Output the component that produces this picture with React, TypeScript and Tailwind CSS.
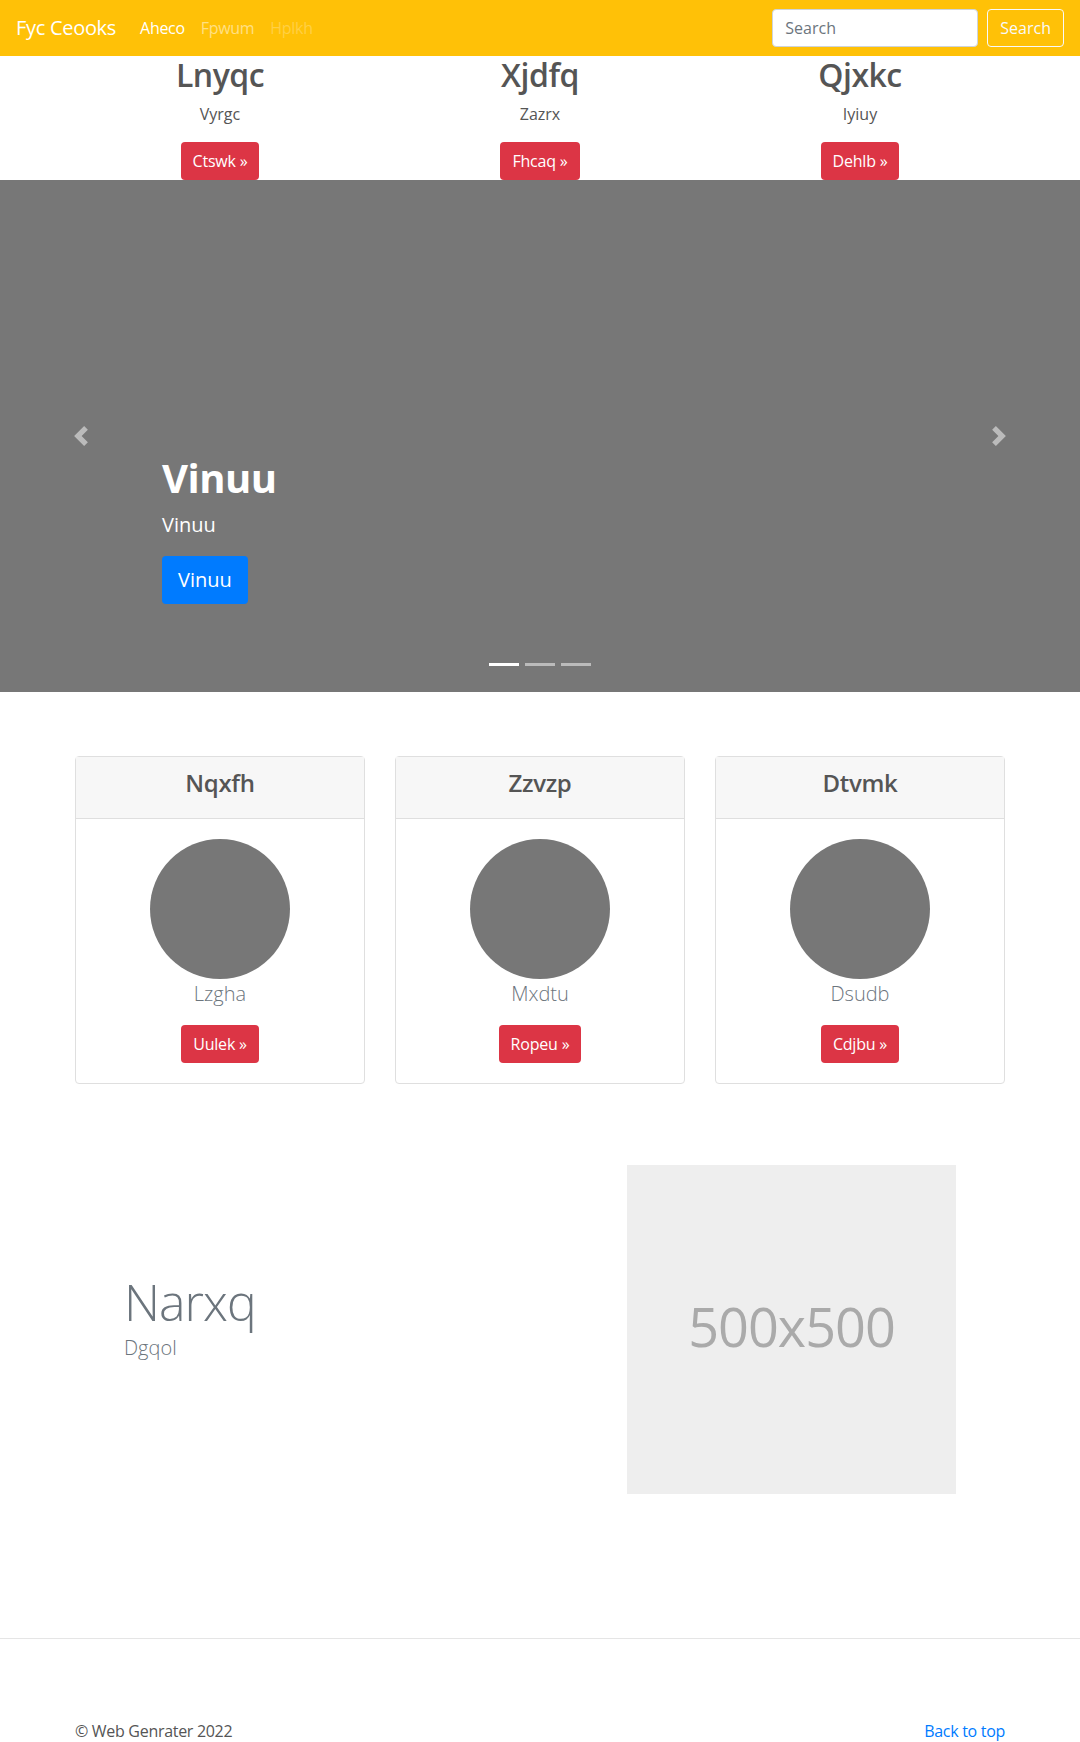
import React from 'react';

const font = { fontFamily: '"Open Sans", "Noto Sans", Arial, sans-serif' };

const topCols = [
    { title: 'Lnyqc', text: 'Vyrgc', btn: 'Ctswk' },
    { title: 'Xjdfq', text: 'Zazrx', btn: 'Fhcaq' },
    { title: 'Qjxkc', text: 'Iyiuy', btn: 'Dehlb' },
];

const cards = [
    { title: 'Nqxfh', text: 'Lzgha', btn: 'Uulek' },
    { title: 'Zzvzp', text: 'Mxdtu', btn: 'Ropeu' },
    { title: 'Dtvmk', text: 'Dsudb', btn: 'Cdjbu' },
];

function RedButton({ label }: { label: string }) {
    return (
        <button className="h-[38px] px-3 rounded bg-[#dc3545] text-white text-[16px] leading-6 tracking-[-0.2px]">
            {label} &raquo;
        </button>
    );
}

function Navbar() {
    return (
        <nav className="h-[56px] bg-[#ffc107] flex items-center px-4">
            <span className="text-[20px] leading-[30px] text-white mr-4 tracking-[-0.3px]">Fyc Ceooks</span>
            <div className="flex">
                <a className="px-2 py-2 text-white tracking-[-0.3px]">Aheco</a>
                <a className="px-2 py-2 text-white/50 tracking-[-0.3px]">Fpwum</a>
                <a className="px-2 py-2 text-white/25 tracking-[-0.3px]">Hplkh</a>
            </div>
            <div className="ml-auto flex items-center gap-[9px]">
                <input
                    className="w-[206px] h-[38px] bg-white border border-[#ced4da] rounded px-3 text-[16px] text-[#495057] placeholder:text-[#6c757d] outline-none"
                    placeholder="Search"
                    style={font}
                />
                <button className="h-[38px] px-3 border border-[#f8f9fa] rounded text-[#f8f9fa] text-[16px]">Search</button>
            </div>
        </nav>
    );
}

function Chevron({ dir }: { dir: 'prev' | 'next' }) {
    return (
        <svg width="20" height="20" viewBox="0 0 8 8" fill="#fff" className="opacity-50">
            {dir === 'prev' ? (
                <path d="M5.25 0l-4 4 4 4 1.5-1.5L4.25 4l2.5-2.5L5.25 0z" />
            ) : (
                <path d="M2.75 0l-1.5 1.5L3.75 4l-2.5 2.5L2.75 8l4-4-4-4z" />
            )}
        </svg>
    );
}

function Carousel() {
    return (
        <div className="relative h-[512px] bg-[#777]">
            <div className="absolute left-0 top-0 bottom-0 w-[15%] flex items-center justify-center">
                <Chevron dir="prev" />
            </div>
            <div className="absolute right-0 top-0 bottom-0 w-[15%] flex items-center justify-center">
                <Chevron dir="next" />
            </div>
            <div className="absolute left-[15%] right-[15%] bottom-[52px] py-5 text-white">
                <h1 className="text-[40px] leading-[1.2] font-bold mb-2 tracking-[-0.5px]">Vinuu</h1>
                <p className="text-[20px] leading-[30px] mb-4">Vinuu</p>
                <p className="mb-4">
                    <button className="h-[48px] px-4 rounded bg-[#007bff] text-white text-[20px] leading-[30px]">Vinuu</button>
                </p>
            </div>
            <div className="absolute left-0 right-0 top-[483px] flex justify-center gap-[6px]">
                <span className="w-[30px] h-[3px] bg-white" />
                <span className="w-[30px] h-[3px] bg-white/50" />
                <span className="w-[30px] h-[3px] bg-white/50" />
            </div>
        </div>
    );
}

export default function App() {
    return (
        <div className="bg-white text-[#555] text-[16px] leading-6" style={font}>
            <Navbar />

            <div className="w-[960px] mx-auto grid grid-cols-3 text-center">
                {topCols.map((c) => (
                    <div key={c.title}>
                        <h2 className="text-[32px] leading-[1.2] font-semibold mb-2 tracking-[-0.5px]">{c.title}</h2>
                        <p className="mb-4">{c.text}</p>
                        <RedButton label={c.btn} />
                    </div>
                ))}
            </div>

            <Carousel />

            <div className="w-[960px] mx-auto px-[15px] mt-16 grid grid-cols-3 gap-[30px]">
                {cards.map((c) => (
                    <div key={c.title} className="border border-[#dfdfdf] rounded text-center">
                        <div className="bg-[#f7f7f7] border-b border-[#dfdfdf] px-5 pt-3 pb-3">
                            <h4 className="text-[24px] leading-[1.2] font-semibold mb-2 tracking-[-0.3px]">{c.title}</h4>
                        </div>
                        <div className="p-5 flex flex-col items-center">
                            <div className="w-[140px] h-[140px] rounded-full bg-[#777]" />
                            <p className="text-[20px] leading-[30px] font-light text-[#6c757d] mb-4">{c.text}</p>
                            <RedButton label={c.btn} />
                        </div>
                    </div>
                ))}
            </div>

            <div className="w-[960px] mx-auto px-[15px] mt-[81px]">
                <div className="flex items-center px-[49px]">
                    <div className="flex-1 pb-[20px]">
                        <h2 className="text-[50px] leading-none font-light text-[#6c757d] mb-[6px] tracking-[-1px]">Narxq</h2>
                        <p className="text-[20px] leading-[30px] font-light text-[#6c757d]">Dgqol</p>
                    </div>
                    <div className="w-[329px] h-[329px] bg-[#eee] flex items-center justify-center">
                        <span className="text-[54px] text-[#aaa] tracking-[-1px] pb-[8px]">500x500</span>
                    </div>
                </div>
            </div>

            <hr className="mt-[144px] border-0 border-t border-[#e5e5e5]" />

            <footer className="w-[960px] mx-auto px-[15px] pt-20 flex justify-between">
                <p className="tracking-[-0.3px]">&copy; Web Genrater 2022</p>
                <a className="text-[#007bff] tracking-[-0.3px]">Back to top</a>
            </footer>
        </div>
    );
}
